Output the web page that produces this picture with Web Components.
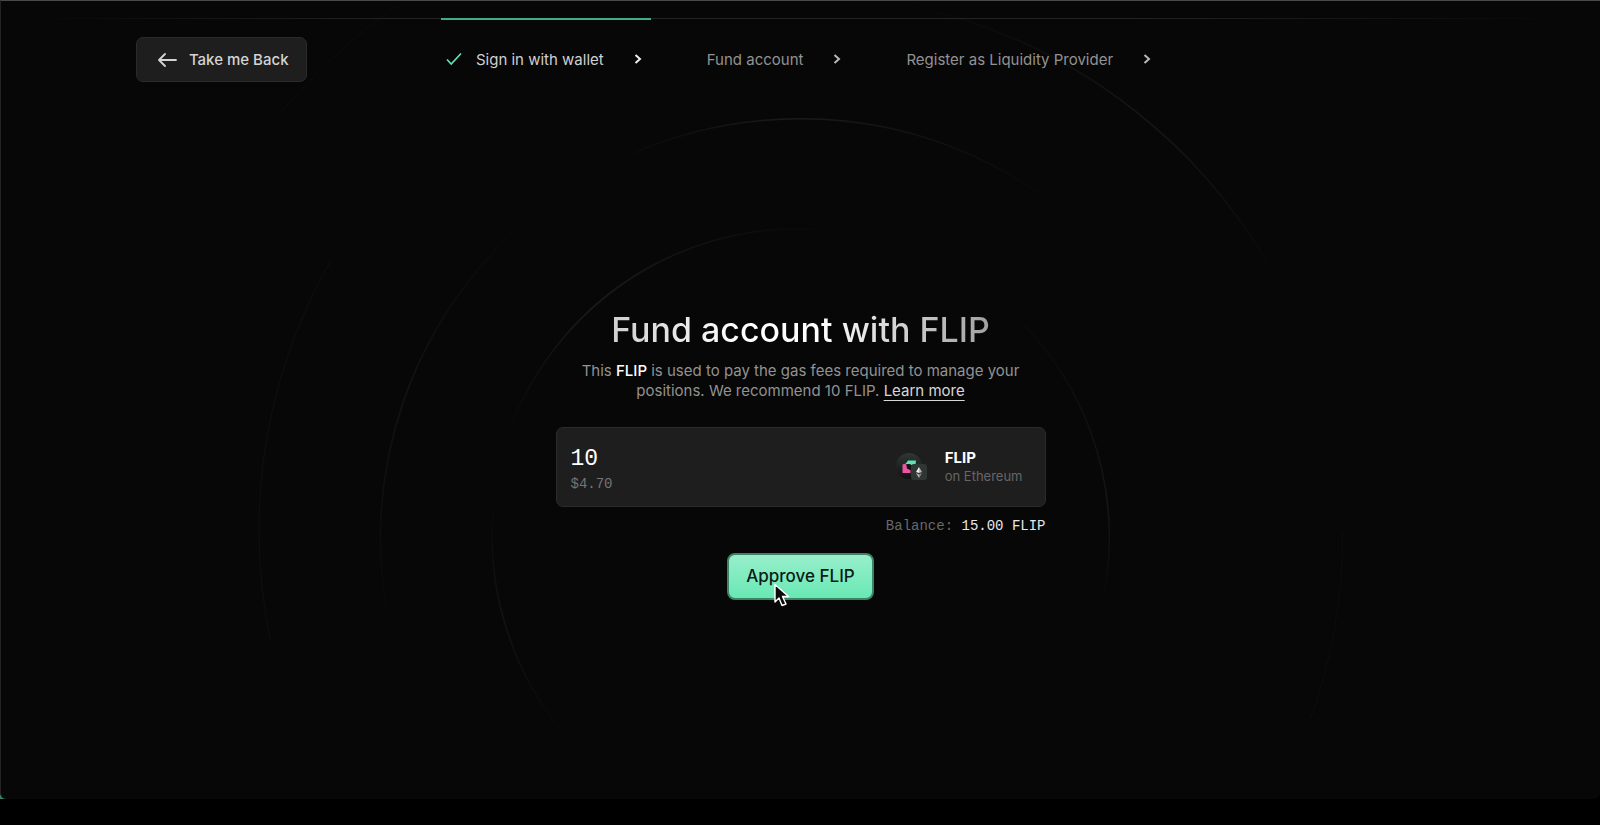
<!DOCTYPE html>
<html lang="en">
<head>
<meta charset="utf-8">
<meta name="viewport" content="width=device-width, initial-scale=1">
<title>Fund account</title>
<style>
  body {
    margin: 0;
    background: #000;
    font-family: Inter, "Liberation Sans", sans-serif;
    font-size: 15px;
    color: #929292;
  }
</style>
</head>
<body>
<lp-shell>
  <lp-header slot="header">
    <lp-back-button slot="back">Take me Back</lp-back-button>
    <lp-step done>Sign in with wallet</lp-step>
    <lp-step>Fund account</lp-step>
    <lp-step>Register as Liquidity Provider</lp-step>
  </lp-header>
  <lp-fund-form></lp-fund-form>
</lp-shell>

<script>
class LpShell extends HTMLElement {
  constructor() {
    super();
    this.attachShadow({ mode: 'open' });
    this.shadowRoot.innerHTML = `
      <style>
        :host {
          display: flex;
          flex-direction: column;
          box-sizing: border-box;
          min-height: 100vh;
          padding-bottom: 26px;
        }

        /* Desktop colour that shows behind the rounded window corner */
        .desktop {
          flex: 1;
          display: flex;
          background: linear-gradient(90deg, #3d8068 8px, #000 8px);
        }

        .window {
          position: relative;
          flex: 1;
          display: flex;
          flex-direction: column;
          overflow: hidden;
          border-top: 1px solid #484a49;
          border-left: 1px solid #232323;
          border-radius: 0 0 6px 6px;
          background: #070707;
        }

        lp-rings {
          position: absolute;
          inset: 0;
        }

        main {
          position: relative;
          flex: 1;
          display: flex;
          align-items: center;
          justify-content: center;
          padding-top: 12px;
        }
      </style>
      <div class="desktop">
        <div class="window">
          <lp-rings></lp-rings>
          <slot name="header"></slot>
          <main><slot></slot></main>
        </div>
      </div>
    `;
  }
}

// Faint concentric arcs behind the form
class LpRings extends HTMLElement {
  constructor() {
    super();
    this.attachShadow({ mode: 'open' });
    this.shadowRoot.innerHTML = `
      <style>
        :host { display: block; }
        svg { display: block; width: 100%; height: 100%; }
        path { fill: none; stroke-width: 1.5; }
      </style>
      <svg viewBox="0 0 1600 798" preserveAspectRatio="xMidYMid slice" aria-hidden="true">
        <defs>
          <linearGradient id="a" gradientUnits="userSpaceOnUse" x1="500" y1="420" x2="840" y2="230">
            <stop offset="0" stop-color="#fff" stop-opacity="0"/>
            <stop offset=".35" stop-color="#fff" stop-opacity=".08"/>
            <stop offset="1" stop-color="#fff" stop-opacity="0"/>
          </linearGradient>
          <linearGradient id="b" gradientUnits="userSpaceOnUse" x1="0" y1="290" x2="0" y2="600">
            <stop offset="0" stop-color="#fff" stop-opacity="0"/>
            <stop offset=".7" stop-color="#fff" stop-opacity=".06"/>
            <stop offset="1" stop-color="#fff" stop-opacity="0"/>
          </linearGradient>
          <linearGradient id="c" gradientUnits="userSpaceOnUse" x1="0" y1="490" x2="0" y2="740">
            <stop offset="0" stop-color="#fff" stop-opacity="0"/>
            <stop offset=".5" stop-color="#fff" stop-opacity=".05"/>
            <stop offset="1" stop-color="#fff" stop-opacity="0"/>
          </linearGradient>
          <linearGradient id="d" gradientUnits="userSpaceOnUse" x1="610" y1="0" x2="1060" y2="0">
            <stop offset="0" stop-color="#fff" stop-opacity="0"/>
            <stop offset=".4" stop-color="#fff" stop-opacity=".08"/>
            <stop offset="1" stop-color="#fff" stop-opacity="0"/>
          </linearGradient>
          <linearGradient id="e" gradientUnits="userSpaceOnUse" x1="0" y1="200" x2="0" y2="640">
            <stop offset="0" stop-color="#fff" stop-opacity="0"/>
            <stop offset=".45" stop-color="#fff" stop-opacity=".05"/>
            <stop offset="1" stop-color="#fff" stop-opacity="0"/>
          </linearGradient>
          <linearGradient id="f" gradientUnits="userSpaceOnUse" x1="900" y1="0" x2="1290" y2="270">
            <stop offset="0" stop-color="#fff" stop-opacity="0"/>
            <stop offset=".6" stop-color="#fff" stop-opacity=".06"/>
            <stop offset="1" stop-color="#fff" stop-opacity="0"/>
          </linearGradient>
        </defs>
        <path stroke="url(#a)" d="M508 432 A308 308 0 0 1 860 234"/>
        <path stroke="url(#b)" d="M980 286 A308 308 0 0 1 1100 610"/>
        <path stroke="url(#c)" d="M495 490 A308 308 0 0 0 584 755"/>
        <path stroke="url(#d)" d="M616 160 A420 420 0 0 1 1060 208"/>
        <path stroke="url(#e)" d="M541 207 A420 420 0 0 0 393 642"/>
        <path stroke="url(#f)" d="M905 4 A542 542 0 0 1 1290 306"/>
        <path stroke="#0d0d0d" d="M330 260 A542 542 0 0 0 270 640"/>
        <path stroke="#0b0b0b" d="M1342 530 A542 542 0 0 1 1310 718M395 5 A669 669 0 0 0 280 112"/>
      </svg>
    `;
  }
}

class LpHeader extends HTMLElement {
  constructor() {
    super();
    this.attachShadow({ mode: 'open' });
    this.shadowRoot.innerHTML = `
      <style>
        :host {
          position: relative;
          display: grid;
          grid-template-columns: 1fr auto 1fr;
          align-items: start;
          margin-top: 17px;
          padding: 0 8%;
          background: linear-gradient(90deg, transparent 2%, #242424 25%, #242424 70%, transparent 98%) 0 0 / 100% 1px no-repeat;
        }
        .back { padding: 19px 0 0 7px; }
        nav { display: flex; }
      </style>
      <div class="back"><slot name="back"></slot></div>
      <nav aria-label="Progress"><slot></slot></nav>
    `;
  }
}

class LpBackButton extends HTMLElement {
  constructor() {
    super();
    this.attachShadow({ mode: 'open' });
    this.shadowRoot.innerHTML = `
      <style>
        :host { display: inline-block; }
        button {
          display: flex;
          align-items: center;
          gap: 12px;
          height: 45px;
          padding: 0 17px 0 20px;
          border: 1px solid #2b2b2b;
          border-radius: 7px;
          background: #1e1e1e;
          color: #d4d4d4;
          font: inherit;
          font-weight: 500;
          white-space: nowrap;
          cursor: pointer;
        }
        svg { display: block; }
      </style>
      <button type="button">
        <svg width="20" height="16" viewBox="0 0 20 16" fill="none" stroke="currentColor" stroke-width="1.8" stroke-linecap="round" stroke-linejoin="round" aria-hidden="true">
          <path d="M19 8H2M8 2L2 8l6 6"/>
        </svg>
        <span><slot></slot></span>
      </button>
    `;
  }
}

class LpStep extends HTMLElement {
  constructor() {
    super();
    this.attachShadow({ mode: 'open' });
    this.shadowRoot.innerHTML = `
      <style>
        :host {
          display: flex;
          align-items: center;
          box-sizing: border-box;
          height: 80px;
          padding: 0 9px 0 56px;
          border-top: 2px solid transparent;
          white-space: nowrap;
        }
        :host([done]) {
          padding-left: 5px;
          border-top-color: #3fae84;
          color: #d0d0d0;
        }
        .check { display: none; margin-right: 14px; }
        :host([done]) .check { display: block; }
        .chevron { margin-left: 30px; color: #b8b8b8; }
        :host([done]) .chevron { color: #ededed; }
      </style>
      <svg class="check" width="16" height="14" viewBox="0 0 16 14" fill="none" stroke="#5fe3b0" stroke-width="1.7" aria-hidden="true">
        <path d="M1 7.5L5.200 12 15 1.500"/>
      </svg>
      <slot></slot>
      <svg class="chevron" width="8" height="10" viewBox="0 0 8 10" fill="none" stroke="currentColor" stroke-width="2" aria-hidden="true">
        <path d="M1.500 1L6 5 1.500 9"/>
      </svg>
    `;
  }
}

class LpFundForm extends HTMLElement {
  constructor() {
    super();
    this.attachShadow({ mode: 'open' });
    this.shadowRoot.innerHTML = `
      <style>
        :host {
          display: block;
          width: 490px;
          max-width: 100%;
        }
        form {
          display: flex;
          flex-direction: column;
          align-items: center;
        }
        h1 {
          margin: 0;
          font-size: 34px;
          line-height: 40px;
          font-weight: 500;
          white-space: nowrap;
          color: transparent;
          background: linear-gradient(90deg, #cfcfcf, #fff 35%, #fff 55%, #a0a0a0);
          -webkit-background-clip: text;
          background-clip: text;
        }
        p {
          margin: 11px 0 26px;
          line-height: 20px;
          text-align: center;
        }
        p strong { font-weight: 500; color: #fff; }
        a {
          color: #d8d8d8;
          text-decoration: underline;
          text-underline-offset: 4px;
        }
        lp-balance { align-self: flex-end; margin: 10px 0 17px; }
      </style>
      <form>
        <h1>Fund account with FLIP</h1>
        <p>This <strong>FLIP</strong> is used to pay the gas fees required to manage your<br>
        positions. We recommend 10 FLIP. <a href="#learn">Learn more</a></p>
        <lp-amount-field value="10" fiat="$4.70">
          <lp-token-icon slot="icon"></lp-token-icon>
          <span slot="token">FLIP</span>
          <span slot="chain">on Ethereum</span>
        </lp-amount-field>
        <lp-balance>15.00 FLIP</lp-balance>
        <lp-primary-button>Approve FLIP</lp-primary-button>
      </form>
    `;
  }
}

class LpAmountField extends HTMLElement {
  constructor() {
    super();
    this.attachShadow({ mode: 'open' });
    this.shadowRoot.innerHTML = `
      <style>
        :host {
          display: flex;
          align-items: center;
          justify-content: space-between;
          box-sizing: border-box;
          width: 100%;
          height: 80px;
          padding: 0 22px 0 14px;
          border: 1px solid #2b2b2b;
          border-radius: 7px;
          background: #1e1e1e;
        }
        .amount {
          display: flex;
          flex-direction: column;
          gap: 1px;
          padding-top: 6px;
          font-family: "Liberation Mono", monospace;
        }
        input {
          width: 200px;
          height: 28px;
          padding: 0;
          border: 0;
          outline: 0;
          background: none;
          color: #fff;
          font: inherit;
          font-size: 23px;
        }
        .fiat { font-size: 14px; line-height: 20px; color: #747474; }
        .asset { display: flex; align-items: center; gap: 17px; }
        .names { display: flex; flex-direction: column; }
        .token { line-height: 19px; font-weight: 700; color: #fff; }
        .chain { font-size: 13px; line-height: 19px; color: #666; }
      </style>
      <div class="amount">
        <input type="text" inputmode="decimal" aria-label="Amount">
        <span class="fiat"></span>
      </div>
      <div class="asset">
        <slot name="icon"></slot>
        <div class="names">
          <span class="token"><slot name="token"></slot></span>
          <span class="chain"><slot name="chain"></slot></span>
        </div>
      </div>
    `;
  }

  connectedCallback() {
    this.shadowRoot.querySelector('input').value = this.getAttribute('value');
    this.shadowRoot.querySelector('.fiat').textContent = this.getAttribute('fiat');
  }
}

// FLIP logo with the Ethereum chain badge in its corner
class LpTokenIcon extends HTMLElement {
  constructor() {
    super();
    this.attachShadow({ mode: 'open' });
    this.shadowRoot.innerHTML = `
      <style>
        :host { display: block; }
        svg { display: block; }
      </style>
      <svg width="32" height="28" viewBox="0 0 32 28" aria-hidden="true">
        <defs>
          <linearGradient id="g" x1="0" y1="0" x2="0" y2="1">
            <stop offset="0" stop-color="#303735"/>
            <stop offset="1" stop-color="#101010"/>
          </linearGradient>
        </defs>
        <circle cx="13" cy="13" r="13" fill="url(#g)"/>
        <path fill="#e8559f" d="M6.500 11.500L10 10.500l1 5 3.500 1.500V20H6.500z"/>
        <path fill="#5fe3b0" d="M12 7.500H20L19.500 12h-4.500l-1.500-1H9.500z"/>
        <path fill="#141414" d="M11 11.500h4l1 3-2 2.500-3-2z"/>
        <rect x="15" y="11" width="16" height="16" rx="3" fill="#303634"/>
        <path fill="#f0f0f0" d="M23 14v6l-3-1z"/>
        <path fill="#b9b9b9" d="M23 14l3 5-3 1zM20 20l3 1.500V25z"/>
        <path fill="#8c8c8c" d="M26 20l-3 1.500V25z"/>
      </svg>
    `;
  }
}

class LpBalance extends HTMLElement {
  constructor() {
    super();
    this.attachShadow({ mode: 'open' });
    this.shadowRoot.innerHTML = `
      <style>
        :host {
          display: block;
          font-family: "Liberation Mono", monospace;
          font-size: 14px;
          line-height: 19px;
          color: #686868;
        }
        .value { color: #e8e8e8; }
      </style>
      Balance: <span class="value"><slot></slot></span>
    `;
  }
}

class LpPrimaryButton extends HTMLElement {
  constructor() {
    super();
    this.attachShadow({ mode: 'open' });
    this.shadowRoot.innerHTML = `
      <style>
        :host { display: block; position: relative; }
        button {
          height: 47px;
          padding: 0 17px;
          border: 2px solid #3b8467;
          border-radius: 8px;
          background: linear-gradient(#97efcb, #69e8b4);
          color: #0c1b15;
          font: inherit;
          font-size: 17px;
          font-weight: 500;
          white-space: nowrap;
          cursor: pointer;
        }
        /* Pointer resting on the button */
        .pointer {
          position: absolute;
          left: 47px;
          top: 30px;
          pointer-events: none;
        }
      </style>
      <button type="button"><slot></slot></button>
      <svg class="pointer" width="16" height="24" viewBox="0 0 16 24" aria-hidden="true">
        <path d="M1 1.500v17.500l4-4 3 7.500 4-1.500-3.500-7.500h6z" fill="#0a0a0a" stroke="#fff" stroke-width="1.400" stroke-linejoin="round"/>
      </svg>
    `;
  }
}

customElements.define('lp-shell', LpShell);
customElements.define('lp-rings', LpRings);
customElements.define('lp-header', LpHeader);
customElements.define('lp-back-button', LpBackButton);
customElements.define('lp-step', LpStep);
customElements.define('lp-fund-form', LpFundForm);
customElements.define('lp-amount-field', LpAmountField);
customElements.define('lp-token-icon', LpTokenIcon);
customElements.define('lp-balance', LpBalance);
customElements.define('lp-primary-button', LpPrimaryButton);
</script>
</body>
</html>
